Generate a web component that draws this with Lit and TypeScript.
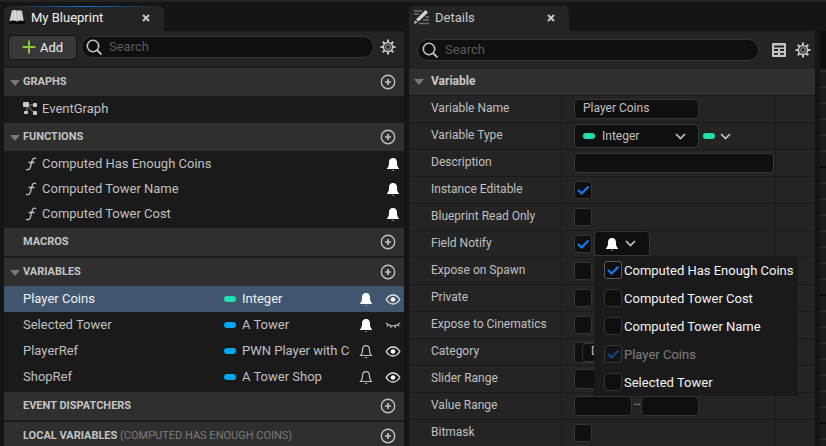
import { LitElement, html, svg, css, nothing } from "lit";
import { customElement, property } from "lit/decorators.js";
import { classMap } from "lit/directives/class-map.js";

const icons = {
  book: svg`<path d="M2 11 1 15h16l-.5-4z" fill="#0a0a0a"/><path d="M4 1.500c1.700-.8 3.500-.7 5 .3 1.500-.9 3.300-.7 5 .3l1.700 10c-2.300-1-5-.8-6.700.5-2-1.400-5-1.400-7.500-.3z" fill="#d8d8d8"/><path d="M6 2 4.500 11M9 2v10M12 2.200l1.200 9" stroke="#b4b4b4" stroke-width=".8" fill="none"/>`,
  pencil: svg`<path d="M1 2h8M1 5h5M12 8h4M10 11h6M6 14.500h10" stroke="#6f6f6f" stroke-width="1.400"/><path d="M12.500 1 15 3.500 5.500 12.500 3 10.500z" fill="#d4d4d4"/><path d="M2.400 11.400 4.500 13.400 .8 15z" fill="#d4d4d4"/>`,
  close: svg`<path d="M2 2l6 6M8 2 2 8" stroke="#c8c8c8" stroke-width="2"/>`,
  plus: svg`<path d="M7 .5v13M.5 7h13" stroke="#8bc63f" stroke-width="2"/>`,
  search: svg`<circle cx="7" cy="7" r="5.700" fill="none" stroke="#c4c4c4" stroke-width="1.600"/><path d="m11 11 4.500 4.500" stroke="#c4c4c4" stroke-width="1.800"/>`,
  gear: svg`<g stroke="#c6c6c6" fill="none"><path d="M8 .5v3M8 12.500v3M.5 8h3M12.500 8h3M2.700 2.700l2.200 2.200M11.100 11.100l2.200 2.200M13.300 2.700l-2.200 2.200M4.900 11.100l-2.200 2.200" stroke-width="2"/><circle cx="8" cy="8" r="4.600" stroke-width="1.500"/><circle cx="8" cy="8" r="2.300" stroke="#808080" stroke-width="1.300"/></g>`,
  add: svg`<circle cx="8" cy="8" r="6.700" fill="none" stroke="#c0c0c0" stroke-width="1.400"/><path d="M8 5v6M5 8h6" stroke="#c0c0c0" stroke-width="1.700"/>`,
  table: svg`<rect x="1" y="1" width="14" height="14" rx="1" fill="#c6c6c6"/><path d="M3 4.500h10M3 8h4M9 8h4M3 11.800h4M9 11.800h4" stroke="#242424" stroke-width="1.800"/>`,
  graph: svg`<path d="M4 4h8M5 5l7 8M4 4v8" stroke="#8c8c8c" stroke-width="1" fill="none"/><rect x="0" y="1" width="6" height="5" rx="1" fill="#c8c8c8"/><rect x="10" y="2" width="4" height="4" rx="1" fill="#c8c8c8"/><rect x="1" y="10" width="4" height="3" rx="1" fill="#c8c8c8"/><rect x="10" y="10" width="4" height="4" rx="1" fill="#c8c8c8"/>`,
  func: svg`<path d="M13 3c-.8-1.200-3-1.300-3.600.8L7.300 11.500C6.700 13.600 4.500 14.200 3 13.200M5.500 6.500h6" fill="none" stroke="#c0c0c0" stroke-width="1.300"/>`,
  bell: svg`<path d="M8 2c3 0 4 2.200 4 4.500 0 3 .5 4.500 2 6v.6H2v-.6c1.500-1.500 2-3 2-6C4 4.200 5 2 8 2z" fill="#fff"/><path d="M6.500 14h3c-.4 1-2.600 1-3 0z" fill="#bbb"/>`,
  bellOff: svg`<path d="M8 2.600c2.700 0 3.400 1.900 3.400 4 0 3 .6 4.400 1.900 5.900H2.700C4 11 4.600 9.600 4.600 6.600c0-2.100.7-4 3.400-4z" fill="none" stroke="#c0c0c0" stroke-width="1.200"/><path d="M6.500 14h3c-.4 1.200-2.600 1.200-3 0z" fill="#c0c0c0"/>`,
  eye: svg`<path d="M1.200 8.500C3 5.500 5.300 4 8 4s5 1.500 6.800 4.500C13 11.500 10.700 13 8 13S3 11.500 1.200 8.500z" fill="none" stroke="#e4e4e4" stroke-width="1.300"/><circle cx="8" cy="8.500" r="2.300" fill="#fff"/>`,
  eyeOff: svg`<path d="M1 6c3.800 3.800 10.200 3.800 14 0M3 7.500 2 9.500M6 9l-.5 2M10 9l.5 2M13 7.500l1 2" fill="none" stroke="#a8a8a8" stroke-width="1.300"/>`,
  chevron: svg`<path d="m1 3 4.500 4.500L10 3" fill="none" stroke="#c4c4c4" stroke-width="1.700"/>`,
  check: svg`<path d="m4 9 3.700 3.500L14.500 5.500" fill="none" stroke="#0f7bf0" stroke-width="2.300"/>`,
  arrow: svg`<path d="M0 3h10L5 9z" fill="#787878"/>`,
};

type IconName = keyof typeof icons;

const icon = (name: IconName, size = 16) =>
  html`<svg class="icon" width=${size} height=${size} viewBox="0 0 ${size} ${size}" aria-hidden="true">${icons[name]}</svg>`;

const base = css`
  * { box-sizing: border-box; }
  button, input, select { font: inherit; color: inherit; margin: 0; }
  button { background: none; border: 0; padding: 0; display: flex; align-items: center; cursor: pointer; }
  svg { display: block; flex: none; }
  .tab {
    display: flex; align-items: center; width: 160px; height: 25px; padding: 0 13px 2px 4px;
    background: #242424; border-radius: 5px 5px 0 0; font-size: 13px; color: #c8c8c8; position: relative;
  }
  .tab .title { flex: 1; padding-left: 5px; }
  .search {
    display: flex; align-items: center; flex: 1; min-width: 0; height: 22px; padding: 0 4px;
    gap: 7px; background: #0f0f0f; border: 1px solid #353535; border-radius: 11px;
  }
  .search input { flex: 1; min-width: 0; border: 0; outline: 0; background: none; padding: 0 0 2px; font-size: 13px; }
  .search input::placeholder { color: #5a5a5a; opacity: 1; }
  .pill { width: 12px; height: 6px; border-radius: 3px; background: #00a8f8; flex: none; }
  .pill.int { background: #1fe0ae; }
`;

@customElement("tick-box")
class TickBox extends LitElement {
  @property() label = "";
  @property({ type: Boolean }) checked = false;
  @property({ type: Boolean }) disabled = false;
  @property({ type: Boolean }) text = false;
  static styles = [base, css`
    :host { display: block; }
    label { display: flex; align-items: center; gap: 2px; white-space: nowrap; }
    .box { display: grid; width: 18px; height: 18px; flex: none; }
    .box > * { grid-area: 1 / 1; }
    input { appearance: none; width: 18px; height: 18px; background: #0f0f0f; border: 1px solid #353535; border-radius: 3px; }
    .text input:checked { border-color: #5c5c5c; }
    svg { visibility: hidden; pointer-events: none; }
    input:checked + svg { visibility: visible; }
    .off { opacity: 0.45; }
  `];
  render() {
    return html`<label class=${classMap({ off: this.disabled, text: this.text })}>
      <span class="box">
        <input type="checkbox" aria-label=${this.label} .checked=${this.checked} ?disabled=${this.disabled}>
        ${icon("check", 18)}
      </span>
      ${this.text ? html`<span>${this.label}</span>` : nothing}
    </label>`;
  }
}

const functions = ["Computed Has Enough Coins", "Computed Tower Name", "Computed Tower Cost"];
const variables = [
  { name: "Player Coins", type: "Integer", int: true, notify: true, visible: true, selected: true },
  { name: "Selected Tower", type: "A Tower", int: false, notify: true, visible: false, selected: false },
  { name: "PlayerRef", type: "PWN Player with Coins", int: false, notify: false, visible: true, selected: false },
  { name: "ShopRef", type: "A Tower Shop", int: false, notify: false, visible: true, selected: false },
];

@customElement("blueprint-panel")
class BlueprintPanel extends LitElement {
  static styles = [base, css`
    :host { display: block; min-width: 0; }
    .tab { color: #f0f0f0; }
    .tab::before {
      content: ""; position: absolute; left: 0; right: 0; top: 0; height: 1px;
      background: linear-gradient(90deg, transparent 4%, #0a70e0 50%, transparent 96%);
    }
    .toolbar { display: flex; align-items: center; gap: 6px; height: 35px; padding: 0 8px 3px 4px; background: #242424; margin-bottom: 2px; }
    .toolbar .search { margin-left: -2px; }
    .new { height: 25px; width: 69px; justify-content: center; gap: 4px; background: #383838; border: 1px solid #121212; border-radius: 4px; color: #f0f0f0; font-size: 13px; }
    .body { background: #1a1a1a; }
    .head { display: flex; align-items: center; height: 28px; padding: 0 8px 0 6px; background: #2f2f2f; margin-bottom: 2px; }
    .head.open { margin-bottom: 0; }
    .caret { width: 13px; }
    h2 { flex: 1; margin: 0; padding-bottom: 2px; font-size: 11px; font-weight: 700; color: #c4c4c4; white-space: nowrap; }
    h2 span { font-weight: 400; color: #7c7c7c; }
    ul { list-style: none; margin: 0; padding: 0 0 2px; font-size: 13px; color: #c0c0c0; }
    li { display: flex; align-items: center; height: 25px; padding: 0 3px 0 19px; }
    li .name { flex: 1; padding-left: 3px; }
    .vars li { height: 26px; gap: 6px; }
    .vars .name { padding: 0 0 2px; min-width: 0; }
    .vars .type { width: 108px; padding-bottom: 2px; overflow: hidden; white-space: nowrap; }
    .flags { display: flex; gap: 11px; padding-left: 2px; }
    li.selected { background: #40566f; color: #f0f0f0; }
  `];
  head(title: string, open: boolean, note = "") {
    return html`<div class=${classMap({ head: true, open })}>
      <span class="caret">${open ? icon("arrow", 11) : nothing}</span>
      <h2>${title}${note ? html` <span>${note}</span>` : nothing}</h2>
      <button aria-label="Add to ${title}">${icon("add")}</button>
    </div>`;
  }
  render() {
    return html`
      <div class="tab">${icon("book", 18)}<span class="title">My Blueprint</span><button aria-label="Close">${icon("close", 10)}</button></div>
      <div class="body">
        <div class="toolbar">
          <button class="new">${icon("plus", 14)}Add</button>
          <div class="search">${icon("search")}<input type="text" placeholder="Search" aria-label="Search blueprint"></div>
          <button aria-label="Settings">${icon("gear")}</button>
        </div>
        ${this.head("GRAPHS", true)}
        <ul><li>${icon("graph")}<span class="name">EventGraph</span></li></ul>
        ${this.head("FUNCTIONS", true)}
        <ul>${functions.map((f) => html`<li>${icon("func")}<span class="name">${f}</span>${icon("bell")}</li>`)}</ul>
        ${this.head("MACROS", false)}
        ${this.head("VARIABLES", true)}
        <ul class="vars">${variables.map((v) => html`
          <li class=${classMap({ selected: v.selected })}>
            <span class="name">${v.name}</span>
            <span class=${classMap({ pill: true, int: v.int })}></span>
            <span class="type">${v.type}</span>
            <span class="flags">
              <button aria-label="Notify">${icon(v.notify ? "bell" : "bellOff")}</button>
              <button aria-label="Visibility">${icon(v.visible ? "eye" : "eyeOff")}</button>
            </span>
          </li>`)}</ul>
        ${this.head("EVENT DISPATCHERS", false)}
        ${this.head("LOCAL VARIABLES", false, "(COMPUTED HAS ENOUGH COINS)")}
      </div>`;
  }
}

const notifyTargets = [
  { label: "Computed Has Enough Coins", checked: true, disabled: false },
  { label: "Computed Tower Cost", checked: false, disabled: false },
  { label: "Computed Tower Name", checked: false, disabled: false },
  { label: "Player Coins", checked: true, disabled: true },
  { label: "Selected Tower", checked: false, disabled: false },
];

@customElement("details-panel")
class DetailsPanel extends LitElement {
  static styles = [base, css`
    :host { display: block; min-width: 0; }
    .body { background: #242424; }
    .toolbar { display: flex; align-items: center; height: 38px; padding: 0 4px 0 8px; }
    .toolbar .search { margin-right: 12px; }
    .toolbar button + button { margin-left: 8px; }
    h2 { display: flex; align-items: center; gap: 7px; height: 26px; margin: 0; padding: 0 5px 2px; background: #2f2f2f; font-size: 12px; font-weight: 700; color: #c8c8c8; }
    .rows { border-top: 1px solid #1a1a1a; font-size: 12px; color: #c0c0c0; }
    .row { display: grid; grid-template-columns: 152px minmax(0, 1fr) 39px; height: 27px; border-bottom: 1px solid #1a1a1a; }
    .row > .label { padding: 5px 0 0 22px; line-height: 15px; }
    .value { display: flex; align-items: center; gap: 2px; padding-left: 12px; border: solid #1a1a1a; border-width: 0 1px; }
    .field { height: 20px; width: 125px; background: #0f0f0f; border: 1px solid #353535; border-radius: 4px; padding: 0 8px 3px; outline: 0; }
    .field.wide { width: 200px; }
    .field.half { width: 58px; }
    .dots { width: 5px; align-self: start; text-align: center; line-height: 16px; }
    .combo { display: grid; grid-template-columns: 29px minmax(0, 1fr) 25px; align-items: center; width: 125px; height: 24px; }
    .combo .pill { grid-area: 1 / 1; margin-left: 9px; pointer-events: none; z-index: 1; }
    .combo svg { grid-area: 1 / 3; margin-left: 1px; pointer-events: none; z-index: 1; }
    .combo select { grid-area: 1 / 1 / 2 / 4; appearance: none; width: 100%; height: 24px; padding: 0 25px 0 27px; background: #0f0f0f; border: 1px solid #353535; border-radius: 4px; }
    .container { gap: 5px; margin-left: 2px; }
    .anchor { position: relative; align-self: start; }
    .notify { width: 56px; height: 25px; padding: 0 0 0 9px; gap: 5px; background: #0f0f0f; border: 1px solid #353535; border-radius: 4px 4px 0 0; }
    .menu { position: absolute; left: 0; top: 100%; z-index: 5; width: 204px; background: #1a1a1a; color: #f4f4f4; font-size: 13px; }
    .menu tick-box { height: 28px; padding: 5px 0 0 10px; }
    .category { display: flex; width: 200px; height: 21px; padding-left: 7px; background: #0f0f0f; border: 1px solid #353535; border-radius: 4px; }
    .category .field { flex: 1; height: 19px; }
  `];
  row(label: string, value: unknown) {
    return html`<div class="row"><span class="label">${label}</span><div class="value">${value}</div><span></span></div>`;
  }
  tick(label: string, checked = false) {
    return this.row(label, html`<tick-box .label=${label} ?checked=${checked}></tick-box>`);
  }
  range(label: string, joined: boolean) {
    return this.row(label, html`
      <input class="field half" type="text" aria-label="${label} minimum">
      <span class="dots">${joined ? ".." : nothing}</span>
      <input class="field half" type="text" aria-label="${label} maximum">`);
  }
  render() {
    return html`
      <div class="tab">${icon("pencil", 17)}<span class="title">Details</span><button aria-label="Close">${icon("close", 10)}</button></div>
      <div class="body">
        <div class="toolbar">
          <div class="search">${icon("search")}<input type="text" placeholder="Search" aria-label="Search details"></div>
          <button aria-label="Property matrix">${icon("table")}</button>
          <button aria-label="Settings">${icon("gear")}</button>
        </div>
        <h2>${icon("arrow", 10)}Variable</h2>
        <div class="rows">
          ${this.row("Variable Name", html`<input class="field" type="text" aria-label="Variable Name" value="Player Coins">`)}
          ${this.row("Variable Type", html`
            <div class="combo"><span class="pill int"></span><select aria-label="Variable Type"><option>Integer</option></select>${icon("chevron", 11)}</div>
            <button class="container" aria-label="Container type"><span class="pill int"></span>${icon("chevron", 11)}</button>`)}
          ${this.row("Description", html`<input class="field wide" type="text" aria-label="Description">`)}
          ${this.tick("Instance Editable", true)}
          ${this.tick("Blueprint Read Only")}
          ${this.row("Field Notify", html`
            <tick-box label="Field Notify" checked></tick-box>
            <div class="anchor">
              <button class="notify" aria-label="Notify targets" aria-expanded="true">${icon("bell")}${icon("chevron", 11)}</button>
              <div class="menu">${notifyTargets.map((t) => html`<tick-box text .label=${t.label} ?checked=${t.checked} ?disabled=${t.disabled}></tick-box>`)}</div>
            </div>`)}
          ${this.tick("Expose on Spawn")}
          ${this.tick("Private")}
          ${this.tick("Expose to Cinematics")}
          ${this.row("Category", html`<div class="category"><input class="field" type="text" aria-label="Category" value="D"></div>`)}
          ${this.range("Slider Range", false)}
          ${this.range("Value Range", true)}
          ${this.tick("Bitmask")}
        </div>
      </div>`;
  }
}

@customElement("app-root")
class AppRoot extends LitElement {
  static styles = css`
    :host {
      display: grid; grid-template-columns: minmax(0, 400fr) minmax(0, 406fr) 6px; column-gap: 5px;
      height: 100vh; overflow: hidden; padding: 4px 0 0 4px; box-sizing: border-box;
      background: #151515; border-top: 2px solid #242424;
      font-family: Roboto, "Liberation Sans", sans-serif;
    }
    .graph { margin-top: 25px; background: #0d0d0d; padding-top: 38px; }
    .grid {
      height: 100%;
      background:
        repeating-linear-gradient(transparent 0 97px, #0d0d0d 97px 99px, transparent 99px 128px),
        repeating-linear-gradient(#1c1c1c 0 1px, #292929 1px 3px, #1c1c1c 3px 16px);
    }
  `;
  render() {
    return html`
      <blueprint-panel></blueprint-panel>
      <details-panel></details-panel>
      <div class="graph"><div class="grid"></div></div>`;
  }
}
